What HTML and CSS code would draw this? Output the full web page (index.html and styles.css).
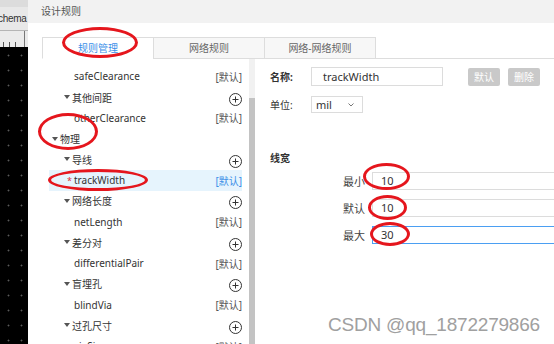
FILE: index.html
```html
<!DOCTYPE html>
<html lang="zh">

<head>
    <meta charset="UTF-8">
    <meta name="viewport" content="width=device-width, initial-scale=1.0">
    <title>设计规则</title>
    <link rel="stylesheet" href="styles.css">
</head>

<body>
    <div class="screen">
        <div class="canvas_strip">
            <div class="strip_tabs">chema</div>
            <div class="strip_ruler"></div>
            <div class="strip_grid"></div>
        </div>

        <div class="dialog">
            <div class="dialog_title">设计规则</div>
            <div class="dialog_body">
                <div class="tabs">
                    <div class="tab tab_active">规则管理</div>
                    <div class="tab">网络规则</div>
                    <div class="tab">网络-网络规则</div>
                </div>

                <div class="panes">
                    <div class="tree">
                        <div class="row row_leaf"><span class="row_name">safeClearance</span><span class="row_default">[默认]</span></div>
                        <div class="row row_group2"><span class="caret"></span><span class="row_name">其他间距</span><svg class="add" viewBox="0 0 13 13"><circle cx="6.5" cy="6.5" r="6" /><path d="M3.5 6.5h6M6.5 3.5v6" /></svg></div>
                        <div class="row row_leaf"><span class="row_name">otherClearance</span><span class="row_default">[默认]</span></div>
                        <div class="row row_group1"><span class="caret"></span><span class="row_name">物理</span></div>
                        <div class="row row_group2"><span class="caret"></span><span class="row_name">导线</span><svg class="add" viewBox="0 0 13 13"><circle cx="6.5" cy="6.5" r="6" /><path d="M3.5 6.5h6M6.5 3.5v6" /></svg></div>
                        <div class="row row_leaf row_selected"><span class="star">*</span><span class="row_name">trackWidth</span><span class="row_default">[默认]</span></div>
                        <div class="row row_group2"><span class="caret"></span><span class="row_name">网络长度</span><svg class="add" viewBox="0 0 13 13"><circle cx="6.5" cy="6.5" r="6" /><path d="M3.5 6.5h6M6.5 3.5v6" /></svg></div>
                        <div class="row row_leaf"><span class="row_name">netLength</span><span class="row_default">[默认]</span></div>
                        <div class="row row_group2"><span class="caret"></span><span class="row_name">差分对</span><svg class="add" viewBox="0 0 13 13"><circle cx="6.5" cy="6.5" r="6" /><path d="M3.5 6.5h6M6.5 3.5v6" /></svg></div>
                        <div class="row row_leaf"><span class="row_name">differentialPair</span><span class="row_default">[默认]</span></div>
                        <div class="row row_group2"><span class="caret"></span><span class="row_name">盲埋孔</span><svg class="add" viewBox="0 0 13 13"><circle cx="6.5" cy="6.5" r="6" /><path d="M3.5 6.5h6M6.5 3.5v6" /></svg></div>
                        <div class="row row_leaf"><span class="row_name">blindVia</span><span class="row_default">[默认]</span></div>
                        <div class="row row_group2"><span class="caret"></span><span class="row_name">过孔尺寸</span><svg class="add" viewBox="0 0 13 13"><circle cx="6.5" cy="6.5" r="6" /><path d="M3.5 6.5h6M6.5 3.5v6" /></svg></div>
                        <div class="row row_leaf"><span class="row_name">viaSize</span><span class="row_default">[默认]</span></div>
                    </div>

                    <div class="scrollbar">
                        <div class="scrollbar_thumb"></div>
                    </div>

                    <div class="editor">
                        <div class="field">
                            <span class="field_label"><b>名称:</b></span>
                            <div class="text_box text_box_name">trackWidth</div>
                            <div class="btn btn_first">默认</div>
                            <div class="btn">删除</div>
                        </div>
                        <div class="field field_unit">
                            <span class="field_label">单位:</span>
                            <div class="select_box">
                                <span>mil</span>
                                <svg class="chevron" viewBox="0 0 6 4"><path d="M0.5 0.5l2.5 2.5 2.5-2.5" /></svg>
                            </div>
                        </div>

                        <div class="section_title">线宽</div>
                        <div class="width_rows">
                            <div class="width_row">
                                <span class="width_label">最小</span>
                                <div class="text_box">10</div>
                            </div>
                            <div class="width_row">
                                <span class="width_label">默认</span>
                                <div class="text_box">10</div>
                            </div>
                            <div class="width_row">
                                <span class="width_label">最大</span>
                                <div class="text_box text_box_focus">30</div>
                            </div>
                        </div>
                    </div>
                </div>
            </div>
        </div>
    </div>

    <!-- red hand-drawn marks over the screenshot -->
    <div class="mark mark_tab"></div>
    <div class="mark mark_physics"></div>
    <div class="mark mark_track"></div>
    <div class="mark mark_min"></div>
    <div class="mark mark_def"></div>
    <div class="mark mark_max"></div>

    <div class="watermark">CSDN @qq_1872279866</div>
</body>

</html>
```

FILE: styles.css
```css
* {
    box-sizing: border-box;
}

body {
    margin: 0;
    width: 554px;
    height: 344px;
    overflow: hidden;
    position: relative;
    font-family: "Noto Sans", "Noto Sans CJK SC", sans-serif;
    font-size: 10px;
    color: #333;
}

.screen {
    display: flex;
    height: 344px;
}

/* editor canvas peeking out on the left */
.canvas_strip {
    width: 28px;
    display: flex;
    flex-direction: column;
    overflow: hidden;
}

.strip_tabs {
    height: 31px;
    background: #e8e8e8;
    border-top: 7px solid #dcdcdc;
    border-bottom: 1px solid #b5b5b5;
    font-family: "Liberation Sans", Arial, sans-serif;
    font-size: 10px;
    line-height: 23px;
    letter-spacing: -0.3px;
    white-space: nowrap;
    text-indent: -2px;
    color: #333;
}

.strip_ruler {
    height: 16px;
    background:
        linear-gradient(to right, transparent 24px, #777 24px, #777 25px, transparent 25px),
        repeating-linear-gradient(to right, transparent 0 3px, #555 3px 4px, transparent 4px 6px) left bottom / 20px 5px no-repeat,
        #ebebeb;
}

.strip_grid {
    flex: 1;
    background-color: #000;
    background-image: radial-gradient(circle, #5a5a5a 0.7px, transparent 1.2px);
    background-size: 13px 15px;
    background-position: 2px 1px;
}

.dialog {
    flex: 1;
    display: flex;
    flex-direction: column;
    background: #fff;
    min-width: 0;
}

.dialog_title {
    height: 23px;
    line-height: 23px;
    padding-left: 13px;
    background: #f2f2f2;
    color: #555;
}

.dialog_body {
    flex: 1;
    display: flex;
    flex-direction: column;
    min-height: 0;
    padding: 14px 0 0 14px;
}

.tabs {
    display: flex;
    height: 22px;
    border-bottom: 1px solid #ddd;
}

.tab {
    width: 112px;
    height: 22px;
    margin-right: -1px;
    border: 1px solid #ddd;
    background: #f7f7f7;
    text-align: center;
    line-height: 20px;
    color: #666;
}

.tab_active {
    background: #fff;
    border-bottom-color: #fff;
    color: #3b8fe8;
}

.panes {
    flex: 1;
    display: flex;
    min-height: 0;
}

.tree {
    width: 207px;
    padding-top: 7px;
    overflow: hidden;
}

.row {
    display: flex;
    align-items: center;
    height: 20.75px;
    margin: 0 7px;
    white-space: nowrap;
}

.row_leaf {
    padding-left: 25px;
}

.row_group1 {
    padding-left: 3px;
}

.row_group2 {
    padding-left: 15px;
}

.row_selected {
    padding-left: 18px;
    background: #e6f4fd;
}

.row_selected .row_default {
    color: #3b8fe8;
}

.star {
    width: 7px;
    color: #e0303a;
    font-size: 9px;
}

.caret {
    width: 0;
    height: 0;
    margin-right: 2px;
    border-left: 3.5px solid transparent;
    border-right: 3.5px solid transparent;
    border-top: 4px solid #555;
}

.row_name {
    flex: 1;
}

.row_default {
    color: #555;
}

.add {
    width: 13px;
    height: 13px;
    margin-top: 4px;
    fill: none;
    stroke: #333;
    stroke-width: 1;
}

.scrollbar {
    width: 6px;
    display: flex;
    flex-direction: column;
    padding-top: 39px;
    background: #f1f1f1;
}

.scrollbar_thumb {
    flex: 1;
    background: #c3c3c3;
}

.editor {
    flex: 1;
    min-width: 0;
    padding: 8px 0 0 15px;
    overflow: hidden;
}

.field {
    display: flex;
    align-items: center;
    height: 19px;
}

.field_unit {
    margin-top: 10px;
    height: 17px;
}

.field_label {
    width: 41px;
}

.text_box {
    flex-shrink: 0;
    height: 19px;
    line-height: 17px;
    padding-left: 8px;
    border: 1px solid #dcdcdc;
    font-size: 11px;
    color: #333;
    white-space: nowrap;
}

.text_box_name {
    width: 132px;
    padding-left: 11px;
}

.btn {
    width: 32px;
    height: 18px;
    margin-left: 8px;
    border-radius: 2px;
    background: #c9c9c9;
    color: #fff;
    text-align: center;
    line-height: 18px;
}

.btn_first {
    margin-left: 25px;
}

.select_box {
    display: flex;
    align-items: center;
    justify-content: space-between;
    width: 52px;
    height: 17px;
    padding: 0 8px 0 4px;
    border: 1px solid #dcdcdc;
    font-size: 11px;
}

.chevron {
    width: 6px;
    height: 4px;
    fill: none;
    stroke: #777;
    stroke-width: 1;
}

.section_title {
    margin-top: 38px;
    height: 14px;
    line-height: 14px;
    font-weight: bold;
}

.width_rows {
    display: flex;
    flex-direction: column;
    gap: 9px;
    margin-top: 7px;
    padding-left: 73px;
}

.width_row {
    display: flex;
    align-items: center;
}

.width_label {
    width: 29px;
    flex-shrink: 0;
    color: #444;
    font-size: 11px;
}

.width_row .text_box {
    width: 260px;
    height: 18px;
    line-height: 16px;
}

.text_box_focus {
    border-color: #4b9ff2;
}

.mark {
    position: absolute;
    border: 3px solid #e5161d;
    border-radius: 50%;
}

.mark_tab {
    left: 62px;
    top: 27px;
    width: 76px;
    height: 31px;
}

.mark_physics {
    left: 38px;
    top: 113px;
    width: 60px;
    height: 37px;
}

.mark_track {
    left: 48px;
    top: 169px;
    width: 100px;
    height: 22px;
}

.mark_min {
    left: 363px;
    top: 163px;
    width: 47px;
    height: 27px;
}

.mark_def {
    left: 368px;
    top: 195px;
    width: 39px;
    height: 25px;
}

.mark_max {
    left: 370px;
    top: 222px;
    width: 40px;
    height: 24px;
}

.watermark {
    position: absolute;
    left: 328px;
    top: 315px;
    font-family: "Liberation Sans", Arial, sans-serif;
    font-size: 19px;
    line-height: 19px;
    letter-spacing: -0.2px;
    color: #a0a0a0;
    text-shadow: 0 0 1px #fff;
    white-space: nowrap;
}
```
